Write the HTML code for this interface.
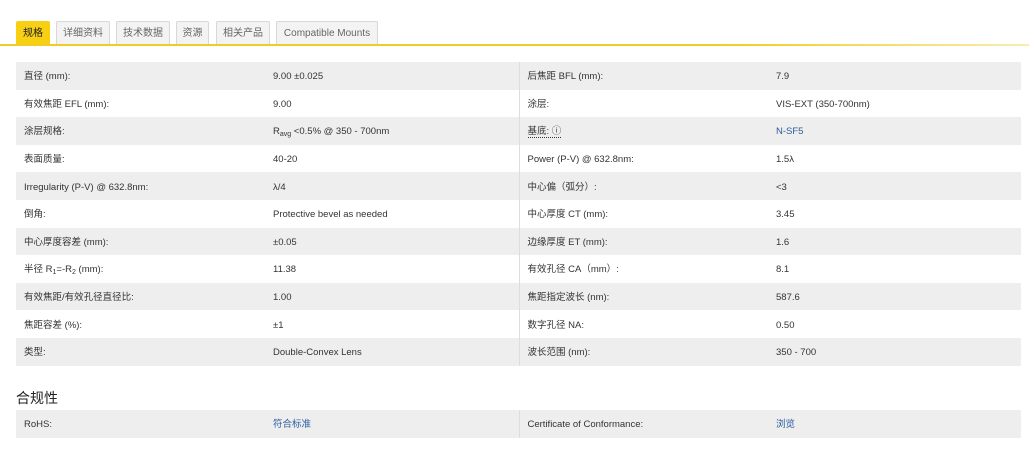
<!DOCTYPE html>
<html><head><meta charset="utf-8"><style>
body{margin:0;background:#fff;font-family:"Liberation Sans","Noto Sans CJK SC",sans-serif;color:#333;width:1029px;height:468px;overflow:hidden;position:relative}
.tab{position:absolute;top:21px;height:24px;box-sizing:border-box;border:1px solid #d8d8d8;border-bottom:none;background:#f3f3f3;font-size:10px;color:#666;text-align:center;line-height:24px;border-radius:2px 2px 0 0}
.tab.a{background:#f7cf13;border-color:#f7cf13;color:#222}
.line{position:absolute;left:0;top:44px;width:1029px;height:2px;background:linear-gradient(90deg,#f0cd20 0%,#f0cd20 70%,#f8ecb0 100%)}
table{position:absolute;left:16px;border-collapse:collapse;width:1005px;font-size:9.5px;table-layout:fixed}
td{height:27.6px;padding:3px 0 0 0;vertical-align:middle;line-height:12px;box-sizing:border-box}
tr:nth-child(odd) td{background:#eeeeee}
td.l{padding-left:8px}
td.v{border-right:1px solid #ddd}
td.l2{padding-left:8px}
a{color:#2a5d9f;text-decoration:none}
sub{font-size:7px;line-height:0;vertical-align:-2px}
h3{position:absolute;left:16px;top:388px;margin:0;font-size:14px;font-weight:normal;color:#222}
</style></head><body>
<div class="tab a" style="left:16px;width:34px">规格</div>
<div class="tab" style="left:56px;width:54px">详细资料</div>
<div class="tab" style="left:116px;width:54px">技术数据</div>
<div class="tab" style="left:176px;width:33px">资源</div>
<div class="tab" style="left:216px;width:54px">相关产品</div>
<div class="tab" style="left:276px;width:102px">Compatible Mounts</div>
<div class="line"></div>
<table style="top:62px">
<colgroup><col style="width:257px"><col style="width:246px"><col style="width:257px"><col></colgroup>
<tr><td class="l">直径 (mm):</td><td class="v">9.00 ±0.025</td><td class="l2">后焦距 BFL (mm):</td><td>7.9</td></tr>
<tr><td class="l">有效焦距 EFL (mm):</td><td class="v">9.00</td><td class="l2">涂层:</td><td>VIS-EXT (350-700nm)</td></tr>
<tr><td class="l">涂层规格:</td><td class="v">R<sub>avg</sub> &lt;0.5% @ 350 - 700nm</td><td class="l2"><span style="border-bottom:1px dotted #333">基底: ⓘ</span></td><td><a>N-SF5</a></td></tr>
<tr><td class="l">表面质量:</td><td class="v">40-20</td><td class="l2">Power (P-V) @ 632.8nm:</td><td>1.5λ</td></tr>
<tr><td class="l">Irregularity (P-V) @ 632.8nm:</td><td class="v">λ/4</td><td class="l2">中心偏（弧分）:</td><td>&lt;3</td></tr>
<tr><td class="l">倒角:</td><td class="v">Protective bevel as needed</td><td class="l2">中心厚度 CT (mm):</td><td>3.45</td></tr>
<tr><td class="l">中心厚度容差 (mm):</td><td class="v">±0.05</td><td class="l2">边缘厚度 ET (mm):</td><td>1.6</td></tr>
<tr><td class="l">半径 R<sub>1</sub>=-R<sub>2</sub> (mm):</td><td class="v">11.38</td><td class="l2">有效孔径 CA（mm）:</td><td>8.1</td></tr>
<tr><td class="l">有效焦距/有效孔径直径比:</td><td class="v">1.00</td><td class="l2">焦距指定波长 (nm):</td><td>587.6</td></tr>
<tr><td class="l">焦距容差 (%):</td><td class="v">±1</td><td class="l2">数字孔径 NA:</td><td>0.50</td></tr>
<tr><td class="l">类型:</td><td class="v">Double-Convex Lens</td><td class="l2">波长范围 (nm):</td><td>350 - 700</td></tr>
</table>
<h3>合规性</h3>
<table style="top:410px">
<colgroup><col style="width:257px"><col style="width:246px"><col style="width:257px"><col></colgroup>
<tr><td class="l">RoHS:</td><td class="v"><a>符合标准</a></td><td class="l2">Certificate of Conformance:</td><td><a>浏览</a></td></tr>
</table>
</body></html>
